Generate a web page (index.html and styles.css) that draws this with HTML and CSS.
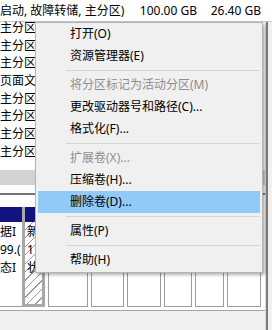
FILE: index.html
```html
<!DOCTYPE html>
<html>
<head>
<title>磁盘管理</title>
<meta charset="UTF-8">
<meta name="viewport" content="width=device-width, initial-scale=1.0">
<link rel="stylesheet" href="styles.css">
</head>
<body>
<div class="screen">
  <div class="main">
    <div class="list">
      <div class="list-head">
        <span>启动, 故障转储, 主分区)</span>
        <span>100.00 GB</span>
        <span>26.40 GB</span>
      </div>
      <div class="list-row">主分区</div>
      <div class="list-row">主分区</div>
      <div class="list-row">主分区</div>
      <div class="list-row">页面文</div>
      <div class="list-row">主分区</div>
      <div class="list-row">主分区</div>
      <div class="list-row">主分区</div>
      <div class="list-row">主分区</div>
    </div>
    <div class="hscroll"></div>
    <div class="pane-gap"></div>
    <div class="pane-line"></div>
    <div class="pane-gap2"></div>
    <div class="disk">
      <div class="part part-first" style="width:22px">
        <div class="part-head"></div>
        <div class="part-body">
          <div class="part-text">据I</div>
          <div class="part-text">99.(</div>
          <div class="part-text">态I</div>
        </div>
      </div>
      <div class="part part-sel" style="width:23px">
        <div class="part-head"></div>
        <div class="part-body">
          <div class="part-text">新</div>
          <div class="part-text">1</div>
          <div class="part-text">状</div>
        </div>
      </div>
      <div class="part" style="width:40px">
        <div class="part-head"></div>
        <div class="part-body">
          <div class="part-text">本地</div>
          <div class="part-text">99 G</div>
          <div class="part-text">状态</div>
        </div>
      </div>
      <div class="part" style="width:33px">
        <div class="part-head"></div>
        <div class="part-body">
          <div class="part-text">软件</div>
          <div class="part-text">50 G</div>
          <div class="part-text">状态</div>
        </div>
      </div>
      <div class="part" style="width:34px">
        <div class="part-head"></div>
        <div class="part-body">
          <div class="part-text">文档</div>
          <div class="part-text">50 G</div>
          <div class="part-text">状态</div>
        </div>
      </div>
      <div class="part" style="width:28px">
        <div class="part-head"></div>
        <div class="part-body">
          <div class="part-text">娱</div>
          <div class="part-text">40</div>
          <div class="part-text">状</div>
        </div>
      </div>
      <div class="part" style="width:29px">
        <div class="part-head"></div>
        <div class="part-body">
          <div class="part-text">备</div>
          <div class="part-text">40</div>
          <div class="part-text">状</div>
        </div>
      </div>
      <div class="part" style="width:34px">
        <div class="part-head"></div>
        <div class="part-body">
          <div class="part-text">资料</div>
          <div class="part-text">80 G</div>
          <div class="part-text">状态</div>
        </div>
      </div>
    </div>
    <div class="disk-foot"></div>
    <div class="bottom"></div>
  </div>
  <div class="vscroll">
    <div class="vscroll-top"></div>
    <div class="vscroll-bar"></div>
  </div>

  <ul class="menu">
    <li class="item">打开(O)</li>
    <li class="item">资源管理器(E)</li>
    <li class="sep"></li>
    <li class="item off">将分区标记为活动分区(M)</li>
    <li class="item">更改驱动器号和路径(C)...</li>
    <li class="item">格式化(F)...</li>
    <li class="sep"></li>
    <li class="item off">扩展卷(X)...</li>
    <li class="item">压缩卷(H)...</li>
    <li class="item hover">删除卷(D)...</li>
    <li class="sep"></li>
    <li class="item">属性(P)</li>
    <li class="sep"></li>
    <li class="item">帮助(H)</li>
  </ul>
</div>
</body>
</html>
```

FILE: styles.css
```css
*{
    box-sizing: border-box;
    margin: 0;
    padding: 0;
}
body{
    width: 272px;
    height: 330px;
    overflow: hidden;
    font-family: "Noto Sans", "Noto Sans CJK SC", sans-serif;
    font-size: 12px;
    color: #000;
    background: #fff;
}
.screen{
    position: relative;
    display: flex;
    width: 272px;
    height: 330px;
}
.main{
    width: 265px;
    display: flex;
    flex-direction: column;
}

/* volume list */
.list{
    height: 170px;
    background: #fff;
    overflow: hidden;
}
.list-head{
    display: grid;
    grid-template-columns: 130px 67px 64px;
    height: 22px;
    line-height: 21px;
    border-bottom: 1px solid #c8c8c8;
    white-space: nowrap;
}
.list-head span:nth-child(n+2){
    text-align: right;
}
.list-row{
    height: 17.7px;
    line-height: 12px;
    white-space: nowrap;
}
.hscroll{
    height: 15px;
    background: #d2d2d2;
}
.pane-gap{
    height: 8px;
}
.pane-line{
    height: 2px;
    background: #747474;
}
.pane-gap2{
    height: 12px;
}

/* disk graphic */
.disk{
    display: flex;
    height: 100px;
}
.part{
    flex: none;
    display: flex;
    flex-direction: column;
    margin-left: 3px;
}
.part-head{
    height: 15px;
    background: #13137f;
}
.part-body{
    flex: 1;
    background: #fff;
    border: 1px solid #9c9c9c;
    border-top: none;
    padding: 1px 0 0 3px;
    overflow: hidden;
}
.part-text{
    height: 18px;
    line-height: 18px;
    white-space: nowrap;
}
.part-first{
    margin-left: 0;
}
.part-first .part-body{
    border-left: none;
    border-right: none;
    padding-left: 0;
}
.part-sel{
    margin-left: 0;
    border: 3px solid #a8a8a8;
    border-top: none;
}
.part-sel .part-body{
    border: none;
    padding-left: 2px;
    background: repeating-linear-gradient(135deg, #fff 0 5px, #9a9a9a 5px 6px);
}
.disk-foot{
    height: 4px;
    border-bottom: 1px solid #a6a6a6;
}
.bottom{
    flex: 1;
    background: #f0f0f0;
}

/* right scroll bar */
.vscroll{
    flex: 1;
    display: flex;
    flex-direction: column;
}
.vscroll-top{
    height: 22px;
    border-bottom: 1px solid #c8c8c8;
}
.vscroll-bar{
    flex: 1;
    background: linear-gradient(to right, #dcdcdc 0 1px, #7c7c7c 1px 3px, #f0f0f0 3px);
}

/* context menu */
.menu{
    position: absolute;
    left: 35px;
    top: 22px;
    width: 228px;
    list-style: none;
    background: #f0f0f0;
    border: 1px solid #b4b4b4;
    padding: 0 2px 1px;
    box-shadow: 2px 2px 3px rgba(0, 0, 0, 0.3);
}
.item{
    height: 22px;
    line-height: 22px;
    padding-left: 32px;
    white-space: nowrap;
}
.item.off{
    color: #8e8e8e;
}
.item.hover{
    background: #91c9f7;
}
.sep{
    height: 7px;
    margin-left: 28px;
    background: linear-gradient(#d5d5d5, #d5d5d5) 0 3px / 100% 1px no-repeat;
}
```
